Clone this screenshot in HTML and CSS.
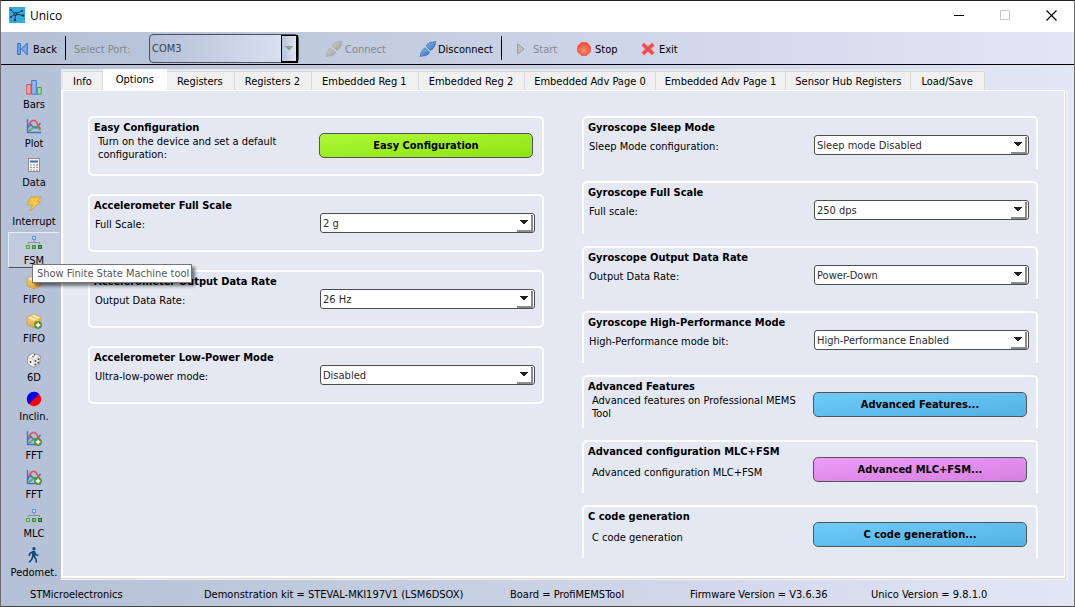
FILE: index.html
```html
<!DOCTYPE html>
<html lang="en">
<head>
<meta charset="utf-8">
<title>Unico</title>
<link rel="stylesheet" href="styles.css">
</head>
<body>
<svg class="defs" width="0" height="0" aria-hidden="true">
  <defs>
    <linearGradient id="goldFill" x1="0" y1="0" x2="0" y2="1"><stop offset="0" stop-color="#fbd97c"/><stop offset="1" stop-color="#e3a93f"/></linearGradient>
    <linearGradient id="boltFill" x1="0" y1="0" x2="1" y2="1"><stop offset="0" stop-color="#f3b63c"/><stop offset="1" stop-color="#ffe24e"/></linearGradient>
    <linearGradient id="blueFill" x1="0" y1="0" x2="1" y2="1"><stop offset="0" stop-color="#8fc0f2"/><stop offset="1" stop-color="#2a68c0"/></linearGradient>
    <linearGradient id="greyFill" x1="0" y1="0" x2="1" y2="1"><stop offset="0" stop-color="#d2d2d2"/><stop offset="1" stop-color="#9b9b9b"/></linearGradient>
    <radialGradient id="redFill" cx=".5" cy=".6" r=".6"><stop offset="0" stop-color="#ff8f6a"/><stop offset="1" stop-color="#f04a34"/></radialGradient>
  </defs>
  <symbol id="i-axes" viewBox="0 0 16 16">
    <path d="M1.500 1v13.500H15" fill="none" stroke="#3978c8" stroke-width="1.400"/>
    <path d="M1.500 10.500 4.500 6 6.500 8.500 10 10l4.500-5" fill="none" stroke="#3a73c4" stroke-width="1.600"/>
    <path d="M2.500 8C4 2.500 8 1 10 3.500c1.500 2 2.500 5 4.500 7.500" fill="none" stroke="#e2545c" stroke-width="1.700"/>
    <path d="M2.500 13c3-.5 4-4.500 7-4.500 2 0 3 2 5 3.500" fill="none" stroke="#59a25c" stroke-width="1.700"/>
  </symbol>
  <symbol id="i-plus" viewBox="0 0 16 16">
    <circle cx="12" cy="12" r="3.600" fill="#5b9a3a" stroke="#3f7a28" stroke-width=".6"/>
    <path d="M12 9.800v4.400M9.800 12h4.400" stroke="#fff" stroke-width="1.400"/>
  </symbol>
  <symbol id="i-box" viewBox="0 0 16 16">
    <path d="M8 1 15 4.300v7L8 15 1 11.300v-7Z" fill="url(#goldFill)" stroke="#cf9437" stroke-width=".8"/>
    <path d="M1.600 4.600 8 1.600l6.400 3L8 8Z" fill="#fdeab4"/>
    <path d="M8 8v6.500l6.500-3.400V4.800Z" fill="#eab04a"/>
    <path d="m4 3.500 6.500 3.200v2.500l1.700-.9V6L5.800 2.700Z" fill="#f6cd6c"/>
  </symbol>
  <symbol id="i-tree" viewBox="0 0 16 16">
    <rect x="6.500" y="1.500" width="3" height="3" fill="#b9dcfb" stroke="#5b98dc"/>
    <path d="M8 5v2.500M2.500 9V7.500h11V9" fill="none" stroke="#8b8f96"/>
    <rect x=".5" y="10.500" width="3" height="3" fill="#a5dd7e" stroke="#5aa548"/>
    <rect x="6.500" y="10.500" width="3" height="3" fill="#72bd5b" stroke="#41913a"/>
    <rect x="12.500" y="10.500" width="3" height="3" fill="#55a44c" stroke="#23782a"/>
  </symbol>
  <symbol id="i-plug" viewBox="0 0 16 16">
    <path d="M.3 15.700 1 11.500 4 7.300l2-.8 3.800 4.200-.6 1.600L6 14.600l-3.500.3Z"/>
    <path d="M15.700.3 15 4.500l-2.800 4-2 .8L6.300 5l.7-1.600L10 1.300l3.500-.3Z"/>
    <path class="plug-gap" d="M5.300 5.800 10.500 11" fill="none" stroke-width="1"/>
  </symbol>
  <symbol id="i-arrow" viewBox="0 0 8 5"><path d="M0 0h8v1H7v1H6v1H5v1H3V3H2V2H1V1H0Z" fill="currentColor"/></symbol>
</svg>

<div class="window">
  <header class="titlebar">
    <svg class="logo" viewBox="0 0 16 16" aria-hidden="true">
      <rect width="16" height="16" fill="#36a9dd"/>
      <path d="M2 3l4 4 7-3M6 7l-4 3M6.500 7 6 13M7 7l7 1.500" fill="none" stroke="#12436e"/>
      <circle cx="6.500" cy="7" r="2" fill="#10395f"/><circle cx="6.500" cy="7" r=".8" fill="#4cb6e4"/>
      <circle cx="2" cy="3" r="1" fill="#10395f"/><circle cx="13" cy="4" r="1" fill="#10395f"/><circle cx="2" cy="10" r="1" fill="#10395f"/><circle cx="6" cy="13" r="1.200" fill="#10395f"/><circle cx="14" cy="8.500" r="1.200" fill="#10395f"/>
    </svg>
    <h1 class="title">Unico</h1>
    <button class="winbtn" aria-label="Minimize"><svg width="11" height="11" viewBox="0 0 11 11"><path d="M0 5.500h10" stroke="#000"/></svg></button>
    <button class="winbtn" aria-label="Maximize" disabled><svg width="11" height="11" viewBox="0 0 11 11"><path d="M.5.500h9v9h-9z" fill="none" stroke="#c8c8c8"/></svg></button>
    <button class="winbtn" aria-label="Close"><svg width="11" height="11" viewBox="0 0 11 11"><path d="M.5.500l10 10M10.500.500l-10 10" stroke="#000" stroke-width="1.200"/></svg></button>
  </header>

  <div class="toolbar" role="toolbar">
    <button class="tool tool-back"><svg width="11" height="14" viewBox="0 0 11 14"><path d="M.7 1.500h2.600v11H.7zM10.300 1.200v11.600L4.200 7Z" fill="#79aae8" stroke="#2f6cc4"/></svg>Back</button>
    <label class="port-label" for="port">Select Port:</label>
    <span class="combo port"><select id="port" disabled><option>COM3</option></select><span class="port-arrow"><svg width="8" height="5"><use href="#i-arrow"/></svg></span></span>
    <button class="tool tool-connect" disabled><svg class="plug-off" width="16" height="16"><use href="#i-plug"/></svg>Connect</button>
    <button class="tool tool-disconnect"><svg class="plug-on" width="16" height="16"><use href="#i-plug"/></svg>Disconnect</button>
    <button class="tool tool-start" disabled><svg width="8" height="12" viewBox="0 0 8 12"><path d="M.7.800v10.400L7 6Z" fill="#bfc0c2" stroke="#94969a"/></svg>Start</button>
    <button class="tool tool-stop"><svg width="14" height="14" viewBox="0 0 14 14"><path d="M4.300.500h5.400l3.800 3.800v5.400l-3.800 3.800H4.300L.5 9.700V4.300Z" fill="url(#redFill)" stroke="#e0695c"/></svg>Stop</button>
    <button class="tool tool-exit"><svg width="14" height="14" viewBox="0 0 14 14"><path d="M3 1 7 4.500 11 1l2.300 2.300L9.700 7l3.600 3.800L11 13 7 9.500 3 13 .8 10.800 4.300 7 .8 3.300Z" fill="#f2494e" stroke="#f0787a" stroke-width=".8"/></svg>Exit</button>
  </div>

  <div class="workspace">
    <nav class="sidebar" aria-label="Tools">
      <button class="side"><svg viewBox="0 0 16 16"><path d="M.8 5.500h4v9.700h-4z" fill="#f7a5a5" stroke="#e24a50"/><path d="M11.200 8.500h4v6.700h-4z" fill="#9fdb93" stroke="#3e9b46"/><path d="M5.700 1.500h4.600v13.700H5.700z" fill="#8cb9f2" stroke="#3a78d0"/></svg>Bars</button>
      <button class="side"><svg viewBox="0 0 16 16"><use href="#i-axes"/></svg>Plot</button>
      <button class="side"><svg viewBox="0 0 16 16"><rect x="2.500" y="1.500" width="11" height="13" fill="#f4f4f4" stroke="#8d8d8d"/><path d="M4 3.500h8v2H4z" fill="#3e6db4"/><path d="M4 8h2M7 8h2M4 10.500h2M7 10.500h2M4 13h2M7 13h2M10 10.500h2M10 13h2" stroke="#8c96a5"/><path d="M10 8h2" stroke="#df4545"/></svg>Data</button>
      <button class="side"><svg viewBox="0 0 16 16"><path d="M5 1h10l-3.500 4.500H14.500L4 15l2.500-6H1.200Z" fill="url(#boltFill)" stroke="#dd9831" stroke-width=".9"/></svg>Interrupt</button>
      <button class="side side-hover" aria-describedby="fsm-tip"><svg viewBox="0 0 16 16"><use href="#i-tree"/></svg>FSM</button>
      <button class="side"><svg viewBox="0 0 16 16"><use href="#i-box"/></svg>FIFO</button>
      <button class="side"><svg viewBox="0 0 16 16"><use href="#i-box"/><use href="#i-plus"/></svg>FIFO</button>
      <button class="side"><svg viewBox="0 0 16 16"><path d="M7 .8 14.500 4 13.500 12 8 15.500 1.800 12 1.200 5Z" fill="#f5f5f2" stroke="#92928d" stroke-width=".9"/><path d="M1.500 5 7.500 7.500 14.300 4M7.500 7.500 8 15" fill="none" stroke="#b4b4b0" stroke-width=".7"/><g fill="#444"><circle cx="7" cy="4.800" r=".8"/><circle cx="8.500" cy="2.900" r=".8"/><circle cx="4.500" cy="10" r="1"/><circle cx="9.500" cy="9" r="1"/><circle cx="12.500" cy="7.300" r="1"/><circle cx="9.500" cy="12.500" r="1"/><circle cx="12.200" cy="10.800" r="1"/></g></svg>6D</button>
      <button class="side"><svg viewBox="0 0 16 16"><circle cx="8" cy="8" r="7.200" fill="#f00"/><path d="M2.900 13.100A7.200 7.200 0 0 1 13.100 2.900Z" fill="#00f"/></svg>Inclin.</button>
      <button class="side"><svg viewBox="0 0 16 16"><use href="#i-axes"/><use href="#i-plus"/></svg>FFT</button>
      <button class="side"><svg viewBox="0 0 16 16"><use href="#i-axes"/><use href="#i-plus"/></svg>FFT</button>
      <button class="side"><svg viewBox="0 0 16 16"><use href="#i-tree"/></svg>MLC</button>
      <button class="side"><svg viewBox="0 0 16 16"><g fill="none" stroke="#174a7c" stroke-width="1.600"><path d="M6.500 5 3.800 6.500 3.300 9M8.500 5l1.500 2.800 2.500.8M7.800 9.500l2 2.200.7 4M6.700 9.500l-1 3L3 15.300"/></g><path d="M6 4h3l.4 6H6Z" fill="#174a7c"/><circle cx="8" cy="1.800" r="1.700" fill="#174a7c"/></svg>Pedomet.</button>
      <div class="tooltip" id="fsm-tip" role="tooltip">Show Finite State Machine tool</div>
    </nav>

    <main class="pages">
      <div class="tabs" role="tablist">
        <button class="tab" role="tab">Info</button>
        <button class="tab tab-active" role="tab" aria-selected="true">Options</button>
        <button class="tab" role="tab">Registers</button>
        <button class="tab" role="tab">Registers 2</button>
        <button class="tab" role="tab">Embedded Reg 1</button>
        <button class="tab" role="tab">Embedded Reg 2</button>
        <button class="tab tab-long" role="tab">Embedded Adv Page 0</button>
        <button class="tab tab-long" role="tab">Embedded Adv Page 1</button>
        <button class="tab tab-long" role="tab">Sensor Hub Registers</button>
        <button class="tab" role="tab">Load/Save</button>
      </div>
      <div class="panel-frame">
      <div class="panel" role="tabpanel">
        <div class="column column-left">
          <section class="group group-action">
            <h2>Easy Configuration</h2>
            <p>Turn on the device and set a default configuration:</p>
            <button class="action green">Easy Configuration</button>
          </section>
          <section class="group">
            <h2>Accelerometer Full Scale</h2>
            <label for="afs">Full Scale:</label>
            <span class="combo"><select id="afs"><option>2 g</option></select><span class="arrow"><svg width="8" height="5"><use href="#i-arrow"/></svg></span></span>
          </section>
          <section class="group">
            <h2>Accelerometer Output Data Rate</h2>
            <label for="aodr">Output Data Rate:</label>
            <span class="combo"><select id="aodr"><option>26 Hz</option></select><span class="arrow"><svg width="8" height="5"><use href="#i-arrow"/></svg></span></span>
          </section>
          <section class="group">
            <h2>Accelerometer Low-Power Mode</h2>
            <label for="alp">Ultra-low-power mode:</label>
            <span class="combo"><select id="alp"><option>Disabled</option></select><span class="arrow"><svg width="8" height="5"><use href="#i-arrow"/></svg></span></span>
          </section>
        </div>
        <div class="column column-right">
          <section class="group">
            <h2>Gyroscope Sleep Mode</h2>
            <label for="gsm">Sleep Mode configuration:</label>
            <span class="combo"><select id="gsm"><option>Sleep mode Disabled</option></select><span class="arrow"><svg width="8" height="5"><use href="#i-arrow"/></svg></span></span>
          </section>
          <section class="group">
            <h2>Gyroscope Full Scale</h2>
            <label for="gfs">Full scale:</label>
            <span class="combo"><select id="gfs"><option>250 dps</option></select><span class="arrow"><svg width="8" height="5"><use href="#i-arrow"/></svg></span></span>
          </section>
          <section class="group">
            <h2>Gyroscope Output Data Rate</h2>
            <label for="godr">Output Data Rate:</label>
            <span class="combo"><select id="godr"><option>Power-Down</option></select><span class="arrow"><svg width="8" height="5"><use href="#i-arrow"/></svg></span></span>
          </section>
          <section class="group group-short">
            <h2>Gyroscope High-Performance Mode</h2>
            <label for="ghp">High-Performance mode bit:</label>
            <span class="combo"><select id="ghp"><option>High-Performance Enabled</option></select><span class="arrow"><svg width="8" height="5"><use href="#i-arrow"/></svg></span></span>
          </section>
          <section class="group group-action">
            <h2>Advanced Features</h2>
            <p>Advanced features on Professional MEMS Tool</p>
            <button class="action blue">Advanced Features...</button>
          </section>
          <section class="group group-action">
            <h2>Advanced configuration MLC+FSM</h2>
            <p>Advanced configuration MLC+FSM</p>
            <button class="action pink">Advanced MLC+FSM...</button>
          </section>
          <section class="group group-action">
            <h2>C code generation</h2>
            <p>C code generation</p>
            <button class="action blue">C code generation...</button>
          </section>
        </div>
      </div>
      </div>
    </main>
  </div>

  <footer class="status">
    <span>STMicroelectronics</span>
    <span>Demonstration kit = STEVAL-MKI197V1 (LSM6DSOX)</span>
    <span>Board = ProfiMEMSTool</span>
    <span>Firmware Version = V3.6.36</span>
    <span>Unico Version = 9.8.1.0</span>
  </footer>
</div>
</body>
</html>
```
FILE: styles.css
```css
* { box-sizing: border-box; }

body {
  margin: 0;
  font-family: "DejaVu Sans Condensed", "Noto Sans", sans-serif;
  font-size: 11px;
  line-height: 13px;
  color: #000;
}

button, select { font: inherit; color: inherit; }
button { margin: 0; padding: 0; border: 0; background: none; }
.defs { position: absolute; }

.window {
  display: flex;
  flex-direction: column;
  min-height: 100vh;
  border: 1px solid #6c6c6c;
  border-top-color: #231f20;
  border-bottom-color: #484848;
  background: linear-gradient(90deg, #b3c0d6 0%, #c5cee1 40%, #d2d8ea 65%, #e1e7f5 100%);
}

/* Title bar */
.titlebar {
  display: flex;
  align-items: center;
  height: 31px;
  padding: 0 0 3px 8px;
  background: #fff;
}
.logo { width: 16px; height: 16px; }
.title {
  flex: 1;
  margin: 0 0 0 5px;
  padding-top: 1px;
  font: 12px/16px "Open Sans", "Noto Sans", sans-serif;
}
.winbtn {
  display: grid;
  place-items: center;
  width: 46px;
  height: 28px;
}

/* Toolbar */
.toolbar {
  display: flex;
  align-items: center;
  height: 33px;
  border-bottom: 1px solid #000;
}
.tool {
  display: flex;
  align-items: center;
  height: 24px;
  padding-top: 2px;
  gap: 3px;
  white-space: nowrap;
}
.tool:disabled, .port-label { color: #84878e; }
.tool-back { width: 65px; padding-left: 16px; gap: 5px; border-right: 1px solid #000; }
.port-label { width: 83px; padding: 2px 0 0 8px; }
.port { width: 150px; }
.tool-connect { width: 94px; margin-left: 27px; }
.tool-disconnect { width: 82px; gap: 2px; border-right: 1px solid #000; }
.tool-start { width: 75px; padding-left: 15px; gap: 8px; }
.tool-stop { width: 64px; gap: 4px; }
.tool-exit { gap: 4px; }
.plug-off { fill: url(#greyFill); stroke: #9a9da2; stroke-width: .6; }
.plug-on { fill: url(#blueFill); stroke: #2c5c9e; stroke-width: .6; }
.plug-gap { stroke: #dfe8f4; }

/* Combo boxes */
.combo { position: relative; display: block; }
.combo select {
  display: block;
  width: 100%;
  height: 20px;
  padding: 1px 24px 0 2px;
  border: 1px solid #4d4d4d;
  border-radius: 3px;
  background: #fff;
  color: #2c2c2c;
  appearance: none;
}
.arrow {
  position: absolute;
  top: 2px;
  right: 2px;
  bottom: 1px;
  display: grid;
  place-items: center;
  width: 16px;
  border-right: 2px solid #8b8b8b;
  border-bottom: 2px solid #8b8b8b;
  color: #222;
  pointer-events: none;
}
.port select {
  height: 29px;
  border: 1px solid #4d5258;
  border-radius: 4px;
  background: linear-gradient(90deg, #b4c0d6, #dde4f3);
  color: #3c4048;
  opacity: 1;
}
.port-arrow {
  position: absolute;
  top: 1px;
  right: 1px;
  bottom: 0;
  display: grid;
  place-items: center;
  width: 17px;
  border: 1px solid #000;
  border-right-width: 2px;
  border-bottom-width: 2px;
  background: linear-gradient(90deg, #b9c4d9, #dde4f3);
  color: #999;
  pointer-events: none;
}

/* Sidebar */
.workspace { display: flex; flex: 1; }
.sidebar {
  position: relative;
  display: flex;
  flex-direction: column;
  gap: 3px;
  width: 60px;
  padding: 11px 1px 0 7px;
}
.side {
  display: flex;
  flex-direction: column;
  align-items: center;
  height: 36px;
  padding-top: 2px;
  border: 1px solid transparent;
  line-height: 19px;
  white-space: nowrap;
}
.side svg { flex: none; width: 16px; height: 16px; }
.side-hover {
  border-color: #e6ecf6 transparent #4f545c #e6ecf6;
  background: #c1cbde;
}
.tooltip {
  position: absolute;
  z-index: 2;
  top: 199px;
  left: 31px;
  padding: 1px 2px 1px 4px;
  border: 1px solid #767676;
  background: #fff;
  box-shadow: 3px 3px 3px rgba(0, 0, 0, .5);
  color: #575757;
  line-height: 15px;
  white-space: nowrap;
}

/* Tabs and panel */
.pages {
  display: flex;
  flex: 1;
  flex-direction: column;
  padding: 4px 6px 0 0;
}
.tabs {
  display: flex;
  align-items: flex-end;
  align-self: flex-start;
  height: 21px;
  padding: 0 2px;
  background: #e4e8f2;
}
.tab {
  height: 19px;
  padding: 0 10px;
  border: 1px solid #d9d9d9;
  border-width: 1px 1px 0 0;
  background: #f0f0f0;
  white-space: nowrap;
}
.tab-active { height: 21px; padding: 0 13px; border: 0; background: #fff; }
.tab-active ~ .tab { padding: 0 11px 0 10px; }
.tab-active ~ .tab-long { padding: 0 9px; }
.panel-frame {
  display: flex;
  flex: 1;
  border-right: 2px solid #f0f0f0;
  border-bottom: 1px solid #f0f0f0;
}
.panel {
  display: grid;
  flex: 1;
  grid-template-columns: 1fr 1fr;
  align-items: start;
  gap: 38px;
  padding: 26px 27px 18px;
  border: 1px solid #d9d9d9;
  border-width: 0 1px 1px 0;
  background: #e4e8f3;
  box-shadow: inset 2px 1px #fff, inset -1px -2px #fff;
}
.column { display: flex; flex-direction: column; }
.column-left { gap: 18px; }
.column-right { gap: 12px; }

.group {
  display: grid;
  grid-template-columns: 1fr 215px;
  align-content: start;
  align-items: center;
  min-height: 58px;
  padding: 3px 7px 0 4px;
  border: 2px solid #fff;
  border-radius: 5px;
}
.group h2 {
  grid-column: 1 / -1;
  margin: 0 0 1px;
  font-size: 11px;
  line-height: 13px;
}
.group label { padding: 2px 0 0 1px; }
.group-action {
  grid-template: 12px 30px / 1fr 214px;
  padding-right: 9px;
}
.group-action h2 { margin: 0; }
.group-action p { margin: 0; padding: 0 10px 0 4px; }
.column-left .group-action { min-height: 60px; }
.column-right .group {
  min-height: 53px;
  border-bottom: 0;
  border-radius: 5px 5px 0 0;
}
.column-right .group-short { min-height: 52px; }

.action {
  align-self: start;
  height: 25px;
  border: 1px solid #505458;
  border-radius: 5px;
  font-weight: bold;
}
.green { background: linear-gradient(175deg, #adf838, #8ee411); }
.blue { background: linear-gradient(175deg, #6fcbfa, #55b1e4); }
.pink { background: linear-gradient(175deg, #ee9bf8, #d67fe0); }

/* Status bar */
.status {
  display: grid;
  grid-template-columns: 174fr 306fr 180fr 181fr 203fr;
  align-items: center;
  height: 26px;
  padding: 2px 0 0 29px;
  white-space: nowrap;
}
```
